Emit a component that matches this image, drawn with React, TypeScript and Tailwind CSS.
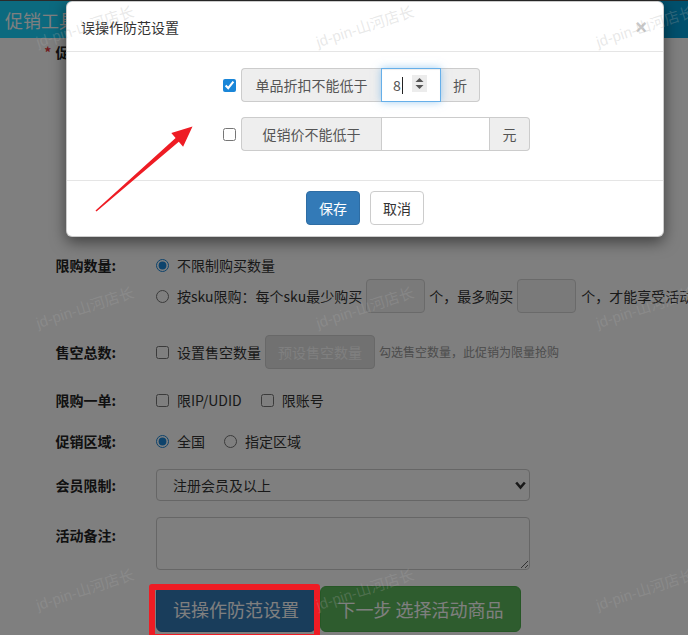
import React from 'react';

const marks: [number, number][] = [
  [85, 27], [365, 27], [645, 27],
  [85, 308], [365, 308], [645, 308],
  [85, 590], [365, 590], [645, 590],
];

function Check({ checked = false }: { checked?: boolean }) {
  return (
    <input
      type="checkbox"
      defaultChecked={checked}
      className="m-0 h-[13px] w-[13px] shrink-0 accent-[#1a86d8]"
    />
  );
}

function Radio({ name, checked = false }: { name: string; checked?: boolean }) {
  return (
    <input
      type="radio"
      name={name}
      defaultChecked={checked}
      className="m-0 h-[13px] w-[13px] shrink-0 accent-[#1a86d8]"
    />
  );
}

interface RowProps {
  label: React.ReactNode;
  className?: string;
  labelClass?: string;
  children?: React.ReactNode;
}

function Row({ label, className = '', labelClass = '', children }: RowProps) {
  return (
    <div className={`flex ${className}`}>
      <div className={`w-[116px] shrink-0 text-right text-[14px] font-bold text-[#222] ${labelClass}`}>
        {label}
      </div>
      <div className="ml-[40px] flex min-w-0 flex-col">{children}</div>
    </div>
  );
}

function Spinner({ className }: { className?: string }) {
  return (
    <svg viewBox="0 0 15 17" className={className}>
      <rect x="0" y="0" width="15" height="17" fill="#ececec" />
      <polygon points="3.5,7 7.5,3 11.5,7" fill="#555" />
      <polygon points="3.5,10 7.5,14 11.5,10" fill="#555" />
    </svg>
  );
}

export default function App() {
  return (
    <div className="relative h-[635px] w-[688px] overflow-hidden bg-white font-['Noto_Sans_CJK_SC',sans-serif] text-[#333]">
      {/* page behind the dialog */}
      <div className="h-px bg-[#565656]" />
      <div className="flex h-[37px]">
        <div className="flex w-[340px] items-center bg-[#18d4ff] pl-[5px] text-[18px] leading-[24px] text-white">
          促销工具
        </div>
        <div className="flex-1 bg-[#00a0da]" />
      </div>

      <Row label={<><span className="mr-[4px] text-[#e4393c]">*</span>促销名称:</>} className="mt-[4px]" labelClass="leading-[20px]" />
      <div className="h-[193px]" />

      <Row label="限购数量:" labelClass="leading-[20px]">
        <div className="flex h-[20px] items-center">
          <Radio name="limit" checked />
          <span className="ml-[8px] text-[14px] leading-[20px]">不限制购买数量</span>
        </div>
        <div className="mt-[4px] flex h-[34px] items-center whitespace-nowrap text-[14px] leading-[20px]">
          <Radio name="limit" />
          <span className="ml-[8px] shrink-0">按sku限购：每个sku最少购买</span>
          <input className="ml-[4px] h-[34px] w-[59px] shrink-0 rounded-[4px] border border-[#d4d4d4] bg-[#f5f5f5]" />
          <span className="ml-[4px] shrink-0">个，最多购买</span>
          <input className="ml-[4px] h-[34px] w-[59px] shrink-0 rounded-[4px] border border-[#d4d4d4] bg-[#f5f5f5]" />
          <span className="ml-[5px] shrink-0">个，才能享受活动优惠</span>
        </div>
      </Row>

      <Row label="售空总数:" className="mt-[22px]" labelClass="leading-[34px]">
        <div className="flex h-[34px] items-center whitespace-nowrap">
          <Check />
          <span className="ml-[8px] text-[14px] leading-[20px]">设置售空数量</span>
          <button
            disabled
            className="ml-[4px] h-[34px] w-[110px] shrink-0 rounded-[4px] border border-[#d0d0d0] bg-[#e2e2e2] text-[14px] text-white"
          >
            预设售空数量
          </button>
          <span className="ml-[4px] text-[12px] text-[#999]">勾选售空数量，此促销为限量抢购</span>
        </div>
      </Row>

      <Row label="限购一单:" className="mt-[21px]" labelClass="leading-[20px]">
        <div className="flex h-[20px] items-center text-[14px] leading-[20px]">
          <Check />
          <span className="ml-[8px]">限IP/UDID</span>
          <span className="ml-[19px] flex items-center">
            <Check />
          </span>
          <span className="ml-[8px]">限账号</span>
        </div>
      </Row>

      <Row label="促销区域:" className="mt-[21px]" labelClass="leading-[20px]">
        <div className="flex h-[20px] items-center text-[14px] leading-[20px]">
          <Radio name="area" checked />
          <span className="ml-[8px]">全国</span>
          <span className="ml-[19px] flex items-center">
            <Radio name="area" />
          </span>
          <span className="ml-[8px]">指定区域</span>
        </div>
      </Row>

      <Row label="会员限制:" className="mt-[18px]" labelClass="leading-[32px]">
        <div className="relative h-[32px] w-[374px]">
          <select className="h-[32px] w-full appearance-none rounded-[4px] border border-[#ccc] bg-white pl-[16px] text-[14px] text-[#333]">
            <option>注册会员及以上</option>
          </select>
          <svg viewBox="0 0 11 9" className="pointer-events-none absolute right-[4px] top-[12px] h-[9px] w-[11px]">
            <path d="M1.2 1.5 L5.5 6.5 L9.8 1.5" fill="none" stroke="#333" strokeWidth="2.6" />
          </svg>
        </div>
      </Row>

      <Row label="活动备注:" className="mt-[16px]" labelClass="mt-[8px] leading-[20px]">
        <textarea className="h-[53px] w-[374px] rounded-[4px] border border-[#ccc] bg-white" />
      </Row>

      <div className="relative ml-[156px] mt-[16px] flex gap-[4px]">
        <button className="relative h-[46px] w-[160px] rounded-[6px] border border-[#2e6da4] bg-[#337ab7] text-[18px] text-white">
          误操作防范设置
          <span className="pointer-events-none absolute left-[-8px] top-[-3px] z-30 h-[56px] w-[171px] rounded-[3px] border-[6px] border-[#ee1c24]" />
        </button>
        <button className="h-[46px] w-[201px] rounded-[6px] border border-[#4cae4c] bg-[#5cb85c] text-[18px] text-white">
          下一步 选择活动商品
        </button>
      </div>

      {/* backdrop */}
      <div className="absolute inset-0 z-10 bg-black/50" />

      {/* dialog */}
      <div className="absolute left-[66px] top-[1px] z-20 w-[598px] rounded-[6px] border border-black/20 bg-white shadow-[0_5px_15px_rgba(0,0,0,0.5)]">
        <div className="flex h-[50px] items-center justify-between border-b border-[#e5e5e5] pl-[14px] pr-[16px]">
          <span className="text-[14px] leading-[20px] text-[#333]">误操作防范设置</span>
          <span className="font-['Liberation_Sans',sans-serif] text-[20px] font-bold leading-[20px] text-[#c8c8c8]">×</span>
        </div>

        <div className="flex flex-col gap-[15px] pb-[29px] pl-[156px] pt-[16px] text-[14px] leading-[20px]">
          <div className="flex items-center">
            <Check checked />
            <div className="ml-[5px] flex h-[34px]">
              <span className="flex w-[140px] items-center justify-center rounded-l-[4px] border border-r-0 border-[#ccc] bg-[#eee] text-[#555]">
                单品折扣不能低于
              </span>
              <div className="relative z-[1] flex h-[34px] w-[60px] items-center border border-[#66afe9] bg-white pl-[11px] shadow-[inset_0_1px_1px_rgba(0,0,0,0.075),0_0_8px_rgba(102,175,233,0.6)]">
                <span className="text-[#555]">8</span>
                <span className="ml-px h-[17px] w-px bg-[#222]" />
                <Spinner className="absolute right-[13px] top-[6px] h-[17px] w-[15px]" />
              </div>
              <span className="flex w-[39px] items-center justify-center rounded-r-[4px] border border-l-0 border-[#ccc] bg-[#eee] text-[#555]">
                折
              </span>
            </div>
          </div>
          <div className="flex items-center">
            <Check />
            <div className="ml-[5px] flex h-[34px]">
              <span className="flex w-[140px] items-center justify-center rounded-l-[4px] border border-r-0 border-[#ccc] bg-[#eee] text-[#555]">
                促销价不能低于
              </span>
              <input className="h-[34px] w-[109px] border border-[#ccc] bg-white px-[12px] text-[#555]" />
              <span className="flex w-[40px] items-center justify-center rounded-r-[4px] border border-l-0 border-[#ccc] bg-[#eee] text-[#555]">
                元
              </span>
            </div>
          </div>
        </div>

        <div className="flex justify-center gap-[10px] border-t border-[#e5e5e5] pb-[11px] pt-[10px] text-[14px]">
          <button className="h-[34px] rounded-[4px] border border-[#2e6da4] bg-[#337ab7] px-[12px] text-white">保存</button>
          <button className="h-[34px] rounded-[4px] border border-[#ccc] bg-white px-[12px] text-[#333]">取消</button>
        </div>
      </div>

      {/* annotation arrow */}
      <svg viewBox="0 0 688 635" className="pointer-events-none absolute inset-0 z-30 h-[635px] w-[688px]">
        <polygon
          points="95.5,210.5 175.6,138 171.3,133.1 192.5,126.5 183.1,146.7 178.8,141.8 96.5,211.5"
          fill="#ee1c24"
        />
      </svg>

      {/* watermark */}
      <div className="pointer-events-none absolute inset-0 z-40">
        {marks.map(([x, y], i) => (
          <span
            key={i}
            className="absolute -translate-x-1/2 -translate-y-1/2 -rotate-[18deg] whitespace-nowrap font-['Liberation_Sans','Noto_Sans_CJK_SC',sans-serif] text-[15px] leading-[20px] text-[rgba(170,170,170,0.27)]"
            style={{ left: x, top: y }}
          >
            jd-pin-山河店长
          </span>
        ))}
      </div>
    </div>
  );
}
